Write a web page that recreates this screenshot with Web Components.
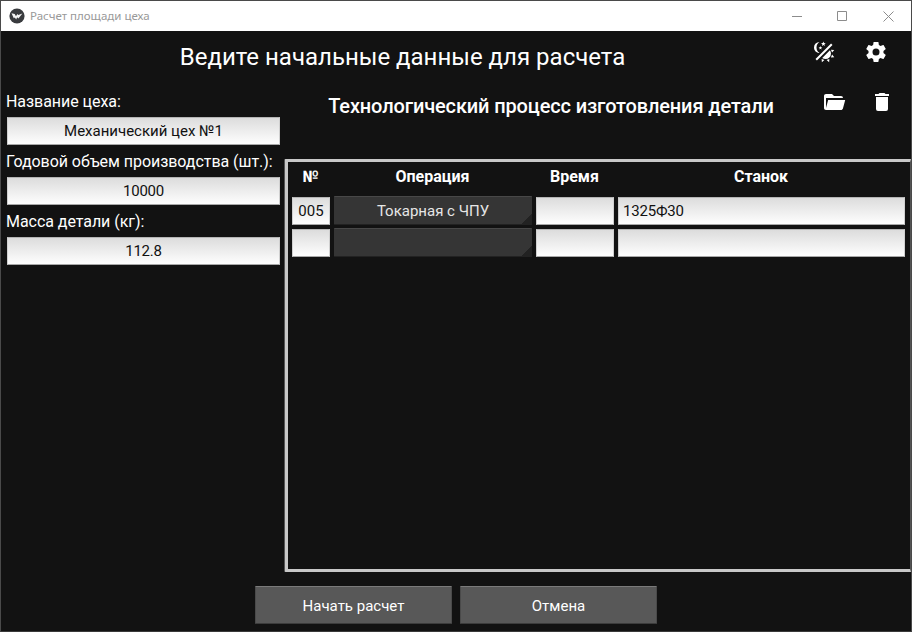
<!DOCTYPE html>
<html lang="ru"><head><meta charset="utf-8"><title>Расчет площади цеха</title>
<style>html,body{margin:0;padding:0;background:#121212;overflow:hidden}body{width:912px;height:632px;font-family:Roboto,"Noto Sans",sans-serif;color:#fff}</style></head>
<body><calc-app></calc-app>
<script>
const define=(name,html,after)=>{
  const t=document.createElement('template');t.innerHTML=html;
  customElements.define(name,class extends HTMLElement{
    constructor(){super();this.attachShadow({mode:'open'}).append(t.content.cloneNode(true));}
    connectedCallback(){if(after)after(this,this.shadowRoot);}
  });
};
const icons={
 theme:'M7.5,2C5.71,3.15 4.5,5.18 4.5,7.5C4.5,9.82 5.71,11.85 7.53,13C4.46,13 2,10.54 2,7.5A5.5,5.5 0 0,1 7.5,2M19.07,3.5L20.5,4.93L4.93,20.5L3.5,19.07L19.07,3.5M12.89,5.93L11.41,5L9.97,6L10.39,4.3L9,3.24L10.75,3.12L11.33,1.47L12,3.1L13.73,3.13L12.38,4.26L12.89,5.93M9.59,9.54L8.43,8.81L7.31,9.59L7.65,8.27L6.56,7.44L7.92,7.35L8.37,6.06L8.88,7.33L10.24,7.36L9.19,8.23L9.59,9.54M19,13.5A5.5,5.5 0 0,1 13.5,19C12.28,19 11.15,18.6 10.24,17.93L17.93,10.24C18.6,11.15 19,12.28 19,13.5M14.6,20.08L17.37,18.93L17.13,22.28L14.6,20.08M18.93,17.38L20.08,14.61L22.28,17.15L18.93,17.38M20.08,12.42L18.94,9.64L22.28,9.88L20.08,12.42M9.63,18.93L12.4,20.08L9.87,22.27L9.63,18.93Z',
 cog:'M12,15.5A3.5,3.5 0 0,1 8.5,12A3.5,3.5 0 0,1 12,8.5A3.5,3.5 0 0,1 15.5,12A3.5,3.5 0 0,1 12,15.5M19.43,12.97C19.47,12.65 19.5,12.33 19.5,12C19.5,11.67 19.47,11.34 19.43,11L21.54,9.37C21.73,9.22 21.78,8.95 21.66,8.73L19.66,5.27C19.54,5.05 19.27,4.96 19.05,5.05L16.56,6.05C16.04,5.66 15.5,5.32 14.87,5.07L14.5,2.42C14.46,2.18 14.25,2 14,2H10C9.75,2 9.54,2.18 9.5,2.42L9.13,5.07C8.5,5.32 7.96,5.66 7.44,6.05L4.95,5.05C4.73,4.96 4.46,5.05 4.34,5.27L2.34,8.73C2.21,8.95 2.27,9.22 2.46,9.37L4.57,11C4.53,11.34 4.5,11.67 4.5,12C4.5,12.33 4.53,12.65 4.57,12.97L2.46,14.63C2.27,14.78 2.21,15.05 2.34,15.27L4.34,18.73C4.46,18.95 4.73,19.03 4.95,18.95L7.44,17.94C7.96,18.34 8.5,18.68 9.13,18.93L9.5,21.58C9.54,21.82 9.75,22 10,22H14C14.25,22 14.46,21.82 14.5,21.58L14.87,18.93C15.5,18.67 16.04,18.34 16.56,17.94L19.05,18.95C19.27,19.03 19.54,18.95 19.66,18.73L21.66,15.27C21.78,15.05 21.73,14.78 21.54,14.63L19.43,12.97Z',
 folder:'M19,20H4C2.89,20 2,19.1 2,18V6C2,4.89 2.89,4 4,4H10L12,6H19A2,2 0 0,1 21,8H4V18L6.14,10H23.21L20.93,18.5C20.7,19.37 19.92,20 19,20Z',
 trash:'M19,4H15.5L14.5,3H9.5L8.5,4H5V6H19M6,19A2,2 0 0,0 8,21H16A2,2 0 0,0 18,19V7H6V19Z'
};
define('md-icon',`<style>:host{display:block;width:24px;height:24px;flex:none}svg{display:block;fill:#fff}</style><svg width="24" height="24" viewBox="0 0 24 24"><path/></svg>`,
 (h,r)=>r.querySelector('path').setAttribute('d',icons[h.getAttribute('name')]));
define('title-bar',`<style>
:host{display:flex;align-items:center;height:30px;background:#fff;color:#999;padding:0 17px 0 8px;box-sizing:border-box;font:11.5px/30px "Noto Sans",sans-serif}
.t{margin-left:5px;flex:1}svg{display:block;flex:none}.w{display:flex;gap:35px}.w svg{fill:none;stroke:#8c8c8c}.w svg:first-child{margin-right:-1px}</style>
<svg width="16" height="16" viewBox="0 0 16 16"><circle cx="8" cy="8" r="7.6" fill="#393b3e"/><path d="M2.5 5.2L5.7 6.1L7 8.2L8.3 5.9L9.2 7L13.4 5.6L9.4 10.6L8.1 9.2L7.2 11.4L5.8 9.6L4.8 10.3Z" fill="#f5f5f5"/></svg>
<span class="t"><slot></slot></span>
<div class="w"><svg width="11" height="11"><path d="M0 5.5H10"/></svg><svg width="11" height="11"><path d="M.5 .5H9.5V9.5H.5Z"/></svg><svg width="11" height="11"><path d="M.5 .5L10.5 10.5M10.5 .5L.5 10.5"/></svg></div>`);
define('text-box',`<style>
:host{display:block;box-sizing:border-box;height:28px;background:linear-gradient(#dcdcdc,#fefefe);border:1px solid;border-color:#b5b5b5 #d0d0d0 #a8a8a8;color:#111;font-size:15px;line-height:27px;text-align:center;white-space:nowrap}
:host([num]){letter-spacing:-.2px}
:host([left]){text-align:left;padding-left:4px}</style><slot></slot>`);
define('form-field',`<style>
:host{display:block;height:60px}.l{font-size:16px;line-height:26px;height:28px;margin-left:-1px;white-space:nowrap;letter-spacing:-.05px}</style>
<div class="l"><span></span></div><text-box><slot></slot></text-box>`,(h,r)=>{
  r.querySelector('span').textContent=h.getAttribute('label');
  r.querySelector('text-box').toggleAttribute('num',h.hasAttribute('num'));
});
define('op-select',`<style>
:host{display:block;box-sizing:border-box;height:29px;margin-top:-1px;border-radius:1px;border-top:1px solid #484848;border-bottom:1px solid #222;background:linear-gradient(135deg,transparent 50%,#222 51%) right bottom/11px 11px no-repeat,#353535;color:#e6e6e6;font-size:15px;line-height:29px;text-align:center}</style><slot></slot>`);
define('op-table',`<style>
:host{display:block;box-sizing:border-box;height:413px;border:3px solid #c8c8c8;border-right:1px solid #555;padding:0 5px 0 4px;box-shadow:-1px 0 #555;border-radius:1px 0 0 1px}
.g{display:grid;grid-template-columns:38px 198px 78px 287px;column-gap:4px;row-gap:4px}
b{height:31px;font-size:16px;line-height:29px;font-weight:700;text-align:center;margin-left:-1px}</style>
<div class="g"><b>№</b><b>Операция</b><b>Время</b><b>Станок</b>
<text-box>005</text-box><op-select>Токарная с ЧПУ</op-select><text-box></text-box><text-box left num>1325Ф30</text-box>
<text-box></text-box><op-select></op-select><text-box></text-box><text-box></text-box></div>`);
define('push-button',`<style>
:host{display:block;box-sizing:border-box;width:197px;height:38px;border:1px solid;border-color:#7b7b7b #4a4a4a #3c3c3c;border-radius:1px;background:#585858;font-size:15px;line-height:38px;text-align:center}</style><slot></slot>`);
define('calc-app',`<style>
:host{display:flex;flex-direction:column;box-sizing:border-box;width:912px;height:632px;border:1px solid #4a4a4a;border-bottom-color:#3a3a3a;background:#121212}
.top{display:grid;grid-template-columns:806px 24px 24px;height:54px;align-items:start}
.top md-icon{margin-top:9px;margin-left:5px}.top md-icon+md-icon{margin-left:33px}
h1{margin:0 3px 0 0;font-size:24px;line-height:52px;font-weight:400;text-align:center}
.main{display:flex;height:488px}.left{width:273px;padding:4px 5px 0 6px;flex:none}
.right{flex:1;display:flex;flex-direction:column;min-width:0}
.sub{display:flex;height:74px;align-items:flex-start}
h2{margin:0;width:532px;font-size:20px;line-height:42px;font-weight:500;text-align:center;white-space:nowrap;letter-spacing:-.14px}
.sub md-icon{margin:5px 24px 0 5px}.sub md-icon+md-icon{margin:5px 0 0}
.foot{display:flex;gap:8px;justify-content:center;padding-top:13px}
</style>
<title-bar>Расчет площади цеха</title-bar>
<div class="top"><h1>Ведите начальные данные для расчета</h1><md-icon name="theme"></md-icon><md-icon name="cog"></md-icon></div>
<div class="main"><div class="left"><form-field label="Название цеха:">Механический цех №1</form-field><form-field num label="Годовой объем производства (шт.):">10000</form-field><form-field num label="Масса детали (кг):">112.8</form-field></div>
<div class="right"><div class="sub"><h2>Технологический процесс изготовления детали</h2><md-icon name="folder"></md-icon><md-icon name="trash"></md-icon></div><op-table></op-table></div></div>
<div class="foot"><push-button>Начать расчет</push-button><push-button>Отмена</push-button></div>`);
</script></body></html>
